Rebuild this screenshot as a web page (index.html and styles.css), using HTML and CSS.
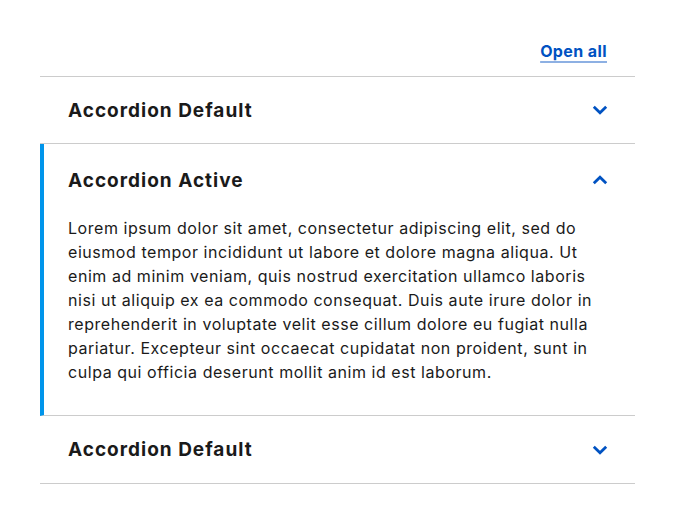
FILE: index.html
```html
<!DOCTYPE html>
<html>
<head>
<meta charset="utf-8">
<link rel="stylesheet" href="styles.css">
</head>
<body>
<div class="wrap">
  <div class="toolbar"><a class="open-all" href="#">Open all</a></div>
  <div class="accordion">
    <div class="item">
      <div class="head">
        <span class="title">Accordion Default</span>
        <svg class="chev" width="16" height="10" viewBox="0 0 16 10"><path d="M1.8 1.8 L8 7.8 L14.2 1.8" fill="none" stroke="#0052c2" stroke-width="2.8"/></svg>
      </div>
    </div>
    <div class="item active">
      <div class="head">
        <span class="title">Accordion Active</span>
        <svg class="chev" width="16" height="10" viewBox="0 0 16 10"><path d="M1.8 8.2 L8 2.2 L14.2 8.2" fill="none" stroke="#0052c2" stroke-width="2.8"/></svg>
      </div>
      <div class="body">Lorem ipsum dolor sit amet, consectetur adipiscing elit, sed do eiusmod tempor incididunt ut labore et dolore magna aliqua. Ut enim ad minim veniam, quis nostrud exercitation ullamco laboris nisi ut aliquip ex ea commodo consequat. Duis aute irure dolor in reprehenderit in voluptate velit esse cillum dolore eu fugiat nulla pariatur. Excepteur sint occaecat cupidatat non proident, sunt in culpa qui officia deserunt mollit anim id est laborum.</div>
    </div>
    <div class="item">
      <div class="head">
        <span class="title">Accordion Default</span>
        <svg class="chev" width="16" height="10" viewBox="0 0 16 10"><path d="M1.8 1.8 L8 7.8 L14.2 1.8" fill="none" stroke="#0052c2" stroke-width="2.8"/></svg>
      </div>
    </div>
  </div>
</div>
</body>
</html>
```
FILE: styles.css
```css
body {
  margin: 0;
  background: #fff;
  font-family: "Inter", "Liberation Sans", sans-serif;
  color: #1a1a1a;
}
.wrap {
  width: 595px;
  margin-left: 40px;
  padding-top: 40px;
}
.toolbar {
  display: flex;
  justify-content: flex-end;
  padding-right: 28px;
  height: 36px;
  align-items: flex-start;
}
.open-all {
  color: #0052c2;
  font-weight: 700;
  font-size: 16px;
  letter-spacing: 0.4px;
  line-height: 22px;
  text-decoration: underline;
  text-decoration-color: #8db0e3;
  text-decoration-thickness: 2px;
  text-underline-offset: 4px;
}
.accordion {
  border-top: 1px solid #cccccc;
}
.item {
  border-bottom: 1px solid #cccccc;
}
.head {
  height: 66px;
  display: flex;
  align-items: center;
  justify-content: space-between;
  padding: 0 27px 0 28px;
}
.item:last-child .head {
  height: 67px;
}
.title {
  font-size: 19px;
  font-weight: 700;
  letter-spacing: 1px;
  color: #1a1a1a;
}
.chev {
  display: block;
}
.active {
  border-left: 4px solid #0095eb;
}
.active .head {
  height: 72px;
  padding-left: 24px;
}
.body {
  padding: 0 36px 31px 24px;
  font-size: 16px;
  letter-spacing: 0.55px;
  line-height: 24px;
  color: #1a1a1a;
}
```
